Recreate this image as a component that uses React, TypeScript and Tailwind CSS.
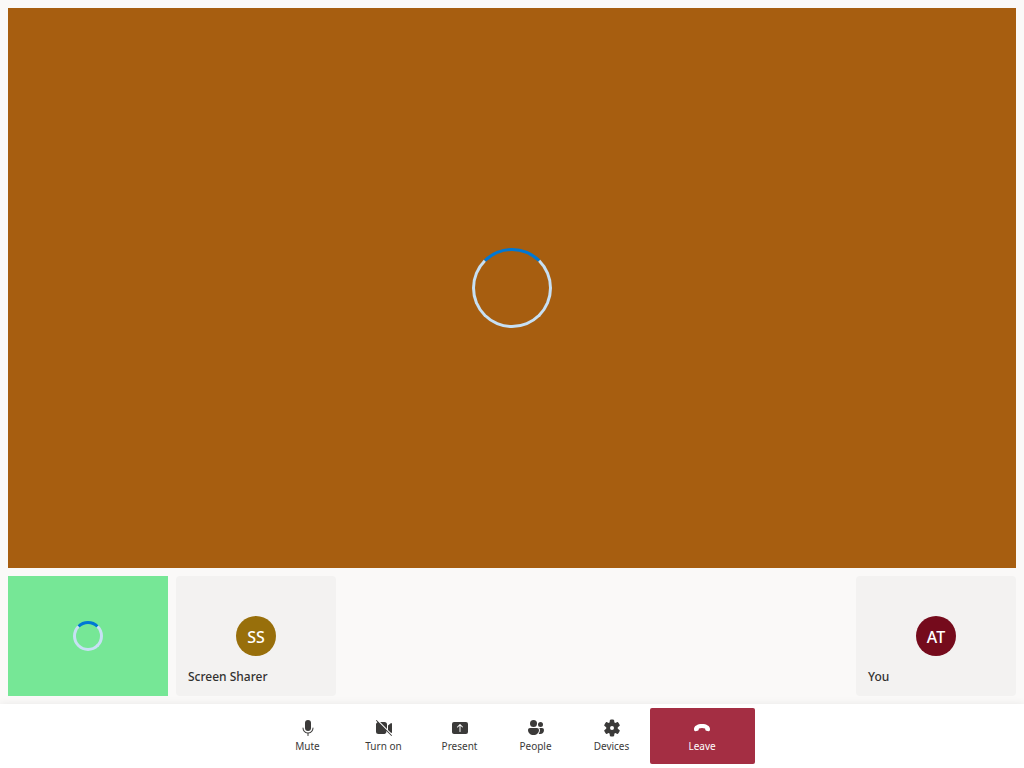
import type { ReactNode } from "react";

function Spinner({ label, className }: { label: string; className: string }) {
  return (
    <div
      role="status"
      aria-label={label}
      className={`box-border rounded-full border-[3px] border-[#c7e0f4] border-t-[#0078d4] ${className}`}
    />
  );
}

function ParticipantTile({ name, initials, avatar }: { name: string; initials: string; avatar: string }) {
  return (
    <div className="grid h-[120px] w-40 shrink-0 grid-rows-[40px_40px_40px] rounded bg-[#f3f2f1]">
      <div
        className={`row-start-2 flex size-10 items-center justify-center justify-self-center rounded-full pt-0.5 text-base font-medium text-white ${avatar}`}
      >
        {initials}
      </div>
      <div className="row-start-3 flex items-center px-3 pt-0.5 text-xs font-medium text-[#323130]">{name}</div>
    </div>
  );
}

function Icon({ children }: { children: ReactNode }) {
  return (
    <svg viewBox="0 0 20 20" className="size-5" fill="currentColor" aria-hidden="true">
      {children}
    </svg>
  );
}

function MicIcon() {
  return (
    <Icon>
      <rect x="7" y="2" width="6" height="11" rx="3" />
      <path d="M5 9.5c.28 0 .5.22.5.5a4.5 4.5 0 0 0 9 0 .5.5 0 0 1 1 0 5.5 5.5 0 0 1-5 5.48v2.02a.5.5 0 0 1-1 0v-2.02A5.5 5.5 0 0 1 4.5 10c0-.28.22-.5.5-.5Z" />
    </Icon>
  );
}

function VideoOffIcon() {
  return (
    <Icon>
      <path d="M2.15 2.15a.5.5 0 0 1 .7 0l15 15a.5.5 0 0 1-.7.7l-4.8-4.79A2.5 2.5 0 0 1 10.5 16h-6A2.5 2.5 0 0 1 2 13.5v-7c0-1.02.6-1.9 1.48-2.3L2.15 2.85a.5.5 0 0 1 0-.7Z" />
      <path d="M6.12 4h4.38A2.5 2.5 0 0 1 13 6.5v4.38L6.12 4ZM14 11.88V7.6l2.76-2.35a.75.75 0 0 1 1.24.57v8.36c0 .46-.4.78-.82.74L14 11.88Z" />
    </Icon>
  );
}

function PresentIcon() {
  return (
    <Icon>
      <path
        fillRule="evenodd"
        d="M4 4a2 2 0 0 0-2 2v8c0 1.1.9 2 2 2h12a2 2 0 0 0 2-2V6a2 2 0 0 0-2-2H4Zm6.5 3.7v5.8a.5.5 0 0 1-1 0V7.7L7.85 9.35a.5.5 0 1 1-.7-.7l2.5-2.5a.5.5 0 0 1 .7 0l2.5 2.5a.5.5 0 0 1-.7.7L10.5 7.7Z"
      />
    </Icon>
  );
}

function PeopleIcon() {
  return (
    <Icon>
      <circle cx="7.5" cy="5.5" r="3.5" />
      <circle cx="14.5" cy="6.5" r="2.5" />
      <path d="M4 10h7a2 2 0 0 1 2 2c0 2.9-2.2 5-5.5 5S2 14.9 2 12c0-1.1.9-2 2-2Z" />
      <path d="M13.25 10H16a2 2 0 0 1 2 2c0 2.5-1.6 4-3.7 4-.6 0-1.1-.1-1.6-.3A6 6 0 0 0 14 12c0-.77-.29-1.47-.75-2Z" />
    </Icon>
  );
}

function SettingsIcon() {
  return (
    <Icon>
      <path
        fillRule="evenodd"
        d="M8.3 1.7c1.1-.25 2.3-.25 3.4 0 .2.05.35.2.38.42l.26 1.8c.14.74.78 1.12 1.42.9l1.72-.72c.2-.08.4-.03.54.12.86.93 1.44 1.93 1.78 3.02.06.2 0 .4-.16.54l-1.48 1.3a1.13 1.13 0 0 0 0 1.84l1.48 1.3c.16.13.22.35.16.54a8.4 8.4 0 0 1-1.78 3.02c-.14.15-.35.2-.54.12l-1.72-.72c-.64-.22-1.28.16-1.42.9l-.26 1.8a.5.5 0 0 1-.38.42c-1.1.25-2.3.25-3.4 0a.5.5 0 0 1-.38-.42l-.26-1.8c-.14-.74-.78-1.12-1.42-.9l-1.72.72a.5.5 0 0 1-.54-.12 8.4 8.4 0 0 1-1.78-3.02.5.5 0 0 1 .16-.54l1.48-1.3a1.13 1.13 0 0 0 0-1.84l-1.48-1.3a.5.5 0 0 1-.16-.54 8.4 8.4 0 0 1 1.78-3.02.5.5 0 0 1 .54-.12l1.72.72c.64.22 1.28-.16 1.42-.9l.26-1.8a.5.5 0 0 1 .38-.42ZM10 8a2 2 0 1 0 0 4 2 2 0 0 0 0-4Z"
      />
    </Icon>
  );
}

function HangUpIcon() {
  return (
    <Icon>
      <path d="M10 6.1c4.5 0 8 2 8 5 0 .7-.1 1.3-.35 1.7-.25.4-.7.55-1.2.45l-2.1-.4a1.2 1.2 0 0 1-.95-.9l-.35-1.4A8.6 8.6 0 0 0 10 9.9c-1.1 0-2.1.2-3.05.65l-.35 1.4c-.1.45-.5.8-.95.9l-2.1.4c-.5.1-.95-.05-1.2-.45A3.3 3.3 0 0 1 2 11.1c0-3 3.5-5 8-5Z" />
    </Icon>
  );
}

const controls = [
  { label: "Mute", icon: <MicIcon /> },
  { label: "Turn on", icon: <VideoOffIcon /> },
  { label: "Present", icon: <PresentIcon /> },
  { label: "People", icon: <PeopleIcon /> },
  { label: "Devices", icon: <SettingsIcon /> },
];

export default function App() {
  return (
    <div className="flex min-h-screen flex-col bg-[#faf9f8] font-['Segoe_UI','Noto_Sans',sans-serif] text-[#323130]">
      <main className="flex flex-1 flex-col gap-2 p-2">
        <section className="flex min-h-60 flex-1 items-center justify-center bg-[#a75e10]">
          <Spinner label="Loading shared screen" className="size-20" />
        </section>
        <section className="flex items-start gap-2">
          <div className="flex h-[120px] w-40 shrink-0 items-center justify-center bg-[#76e796]">
            <Spinner label="Loading video" className="size-[30px]" />
          </div>
          <ParticipantTile name="Screen Sharer" initials="SS" avatar="bg-[#986f0b]" />
          <div className="ml-auto">
            <ParticipantTile name="You" initials="AT" avatar="bg-[#750b1c]" />
          </div>
        </section>
      </main>
      <footer className="flex justify-center bg-white py-1 shadow-[0_0_8px_rgba(0,0,0,0.07)]">
        {controls.map(({ label, icon }) => (
          <button
            key={label}
            type="button"
            className="flex h-14 w-19 flex-col items-center gap-0.5 rounded-xs pt-2.5 text-[10px] leading-3 text-[#3b3a39]"
          >
            {icon}
            {label}
          </button>
        ))}
        <button
          type="button"
          className="flex h-14 w-[105px] flex-col items-center gap-0.5 rounded-xs bg-[#a42e43] pt-2.5 text-[10px] leading-3 text-white"
        >
          <HangUpIcon />
          Leave
        </button>
      </footer>
    </div>
  );
}
